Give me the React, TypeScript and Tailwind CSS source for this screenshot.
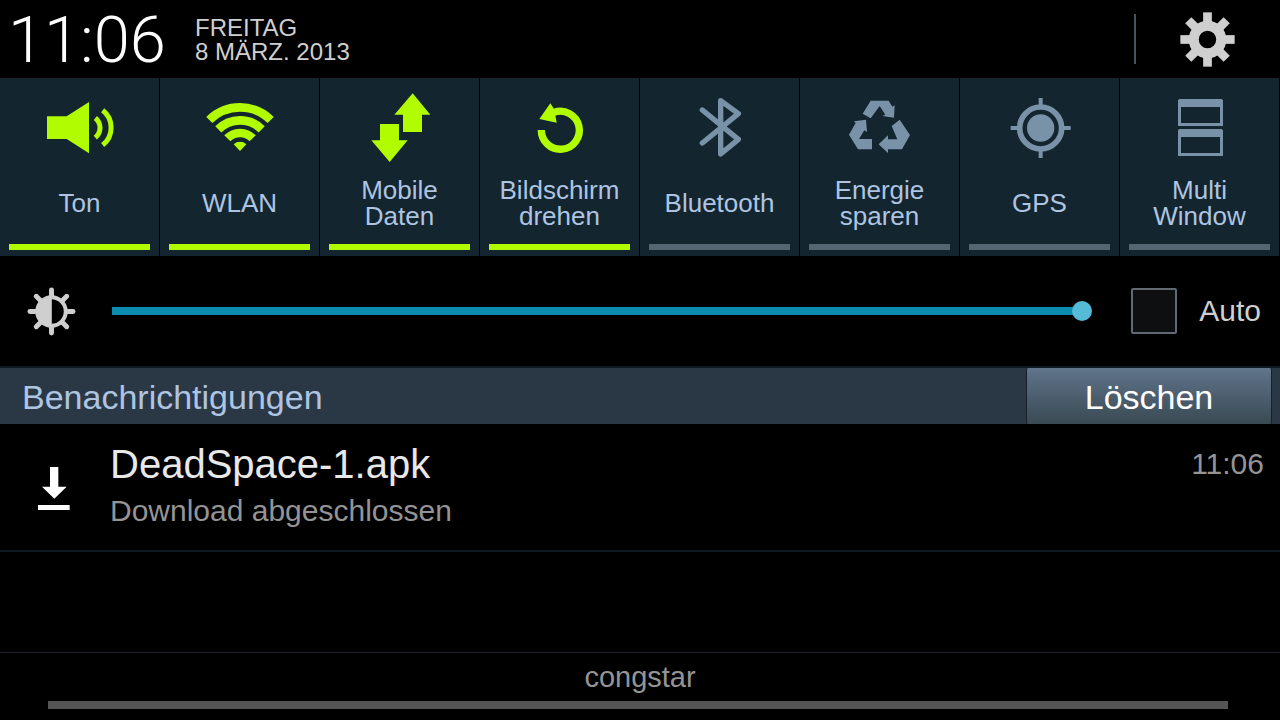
import { useState } from "react"
import type { ReactNode } from "react"

type Toggle = {
  id: string
  label: string
  on: boolean
  icon: ReactNode
}

const initialToggles: Toggle[] = [
  {
    id: "sound",
    label: "Ton",
    on: true,
    icon: (
      <>
        <path d="M141 121H200L267 78V232L200 189H141Z" fill="currentColor" />
        <path d="M286 126A38 38 0 0 1 286 185M308 103A66 66 0 0 1 308 207" fill="none" stroke="currentColor" strokeWidth="15" />
      </>
    ),
  },
  {
    id: "wlan",
    label: "WLAN",
    on: true,
    icon: (
      <>
        <path
          d="M148 132A131 131 0 0 1 332 132M175 160A92 92 0 0 1 305 160M202 187A53 53 0 0 1 278 187"
          fill="none"
          stroke="currentColor"
          strokeWidth="26"
        />
        <path d="M240 225L221 205A28 28 0 0 1 259 205Z" fill="currentColor" />
      </>
    ),
  },
  {
    id: "data",
    label: "Mobile\nDaten",
    on: true,
    icon: (
      <path
        d="M278 52L331 116H306V168H249V116H223ZM180 144H237V193H263L209 258L154 193H180Z"
        fill="currentColor"
      />
    ),
  },
  {
    id: "rotate",
    label: "Bildschirm\ndrehen",
    on: true,
    icon: (
      <>
        <path d="M184 162A57 57 0 1 0 222 109" fill="none" stroke="currentColor" strokeWidth="22" />
        <path d="M211 82L222 99L226 118L230 140L178 129Z" fill="currentColor" />
      </>
    ),
  },
  {
    id: "bluetooth",
    label: "Bluetooth",
    on: false,
    icon: (
      <path
        d="M187 102L295 190L242 234V74L295 113L187 201"
        fill="none"
        stroke="currentColor"
        strokeWidth="16"
        strokeLinecap="round"
        strokeLinejoin="round"
      />
    ),
  },
  {
    id: "energy",
    label: "Energie\nsparen",
    on: false,
    icon: (
      <path
        d="M212 74H266L277 92L284 88L282 125L247 120L256 116L239 90L212 127L188 113ZM162 136L198 131L201 168L193 163L177 189H216V220H174L147 176L167 141ZM299 131L330 177L306 220H264V231L236 205L264 178V190H292L275 150Z"
        fill="currentColor"
      />
    ),
  },
  {
    id: "gps",
    label: "GPS",
    on: false,
    icon: (
      <>
        <circle cx="242" cy="156" r="63" fill="none" stroke="currentColor" strokeWidth="17" />
        <circle cx="242" cy="156" r="41" fill="currentColor" />
        <path d="M242 66V90M242 222V246M152 156H176M308 156H332" stroke="currentColor" strokeWidth="12" />
      </>
    ),
  },
  {
    id: "multi",
    label: "Multi\nWindow",
    on: false,
    icon: (
      <path
        fillRule="evenodd"
        d="M178 69H305L309 73V150H174V73ZM183 93V141H300V93ZM178 159H305L309 163V240H174V163ZM183 183V231H300V183Z"
        fill="currentColor"
      />
    ),
  },
]

const angles = [0, 45, 90, 135, 180, 225, 270, 315]

function GearIcon() {
  return (
    <svg viewBox="-82 -82 164 164" className="h-[55px] w-[55px]" aria-hidden="true">
      <circle r="41" fill="none" stroke="currentColor" strokeWidth="30" />
      {angles.map((a) => (
        <rect key={a} x="-13" y="-81" width="26" height="32" transform={`rotate(${a})`} fill="currentColor" />
      ))}
    </svg>
  )
}

function BrightnessIcon() {
  return (
    <svg viewBox="-74 -74 148 148" className="h-[49px] w-[49px] shrink-0 text-[#cfcfcf]" aria-hidden="true">
      <circle r="43" fill="none" stroke="currentColor" strokeWidth="12" />
      <path d="M1 -44A44 44 0 0 0 1 44Z" fill="currentColor" />
      {angles.map((a) => (
        <path key={a} d="M0 -46V-65" transform={`rotate(${a})`} stroke="currentColor" strokeWidth="15" strokeLinecap="round" />
      ))}
    </svg>
  )
}

export default function App() {
  const [toggles, setToggles] = useState(initialToggles)
  const [brightness, setBrightness] = useState(100)
  const [auto, setAuto] = useState(false)
  const [cleared, setCleared] = useState(false)

  function flip(id: string) {
    setToggles((prev) => prev.map((t) => (t.id === id ? { ...t, on: !t.on } : t)))
  }

  return (
    <div className="flex min-h-screen flex-col bg-black font-['Liberation_Sans',Arial,sans-serif] text-[#cfcfcf]">
      {/* Clock and settings */}
      <header className="flex h-[78px] items-center pl-2">
        <time className="w-[187px] pt-[2px] font-[Roboto,sans-serif] text-[65px] leading-[76px] font-light text-white">11:06</time>
        <p className="pt-[2px] text-2xl leading-6 whitespace-pre-line">{"FREITAG\n8 MÄRZ. 2013"}</p>
        <div className="ml-auto flex h-[50px] w-[146px] items-center border-l-2 border-[#44525f] pl-11">
          <button aria-label="Einstellungen">
            <GearIcon />
          </button>
        </div>
      </header>

      {/* Quick settings */}
      <div className="grid grid-cols-8">
        {toggles.map((t) => (
          <button
            key={t.id}
            aria-pressed={t.on}
            onClick={() => flip(t.id)}
            className="flex flex-col items-center border-r border-black bg-[#132630] pt-[10px] pb-[6px]"
          >
            <svg
              viewBox="117 36 243 228"
              aria-hidden="true"
              className={t.on ? "h-[76px] w-[81px] text-[#b2fc00]" : "h-[76px] w-[81px] text-[#7a92a8]"}
            >
              {t.icon}
            </svg>
            <span className="mt-[13px] flex h-[52px] items-center text-[26px] leading-[26px] whitespace-pre-line text-[#aec4e0]">
              {t.label}
            </span>
            <span className="mt-[15px] w-full px-[9px]">
              <span className={t.on ? "block h-[6px] bg-[#b2fc00]" : "block h-[6px] bg-[#536672]"} />
            </span>
          </button>
        ))}
      </div>

      {/* Brightness */}
      <div className="flex h-[110px] items-center pr-[19px] pl-[27px]">
        <BrightnessIcon />
        <input
          type="range"
          aria-label="Helligkeit"
          min={0}
          max={100}
          value={brightness}
          onChange={(e) => setBrightness(Number(e.target.value))}
          className="mr-[39px] ml-9 h-5 min-w-0 flex-1 appearance-none bg-transparent [&::-webkit-slider-runnable-track]:h-2 [&::-webkit-slider-runnable-track]:bg-[linear-gradient(to_right,#0c8cae_99%,transparent_99%)] [&::-webkit-slider-thumb]:-mt-[6px] [&::-webkit-slider-thumb]:h-5 [&::-webkit-slider-thumb]:w-5 [&::-webkit-slider-thumb]:appearance-none [&::-webkit-slider-thumb]:rounded-full [&::-webkit-slider-thumb]:bg-[#55bbd6]"
        />
        <label className="flex items-center gap-[22px] text-[30px] leading-[48px]">
          <input
            type="checkbox"
            checked={auto}
            onChange={(e) => setAuto(e.target.checked)}
            className="h-[46px] w-[46px] appearance-none rounded-xs border-2 border-[#626972] bg-[#0e0f11] checked:bg-[#0c8cae]"
          />
          Auto
        </label>
      </div>

      {/* Notifications */}
      <div className="flex h-[58px] border-t-2 border-[#0a1924] bg-[#2a3845] pr-2">
        <h2 className="flex-1 pl-[22px] text-[34px] leading-[58px] text-[#aec4e0]">Benachrichtigungen</h2>
        <button
          onClick={() => setCleared(true)}
          className="w-[246px] rounded-xs border-x border-[#172129] bg-linear-to-b from-[#60748b] to-[#3a4a54] text-[34px] leading-[58px] text-white"
        >
          Löschen
        </button>
      </div>
      {!cleared && (
        <article className="flex h-32 items-start border-b-2 border-[#0a1924] pt-4 pr-4">
          <div className="w-[110px] shrink-0 pt-[27px] pl-[38px]">
            <svg viewBox="116 111 96 129" className="h-[43px] w-8 text-white" aria-hidden="true">
              <path d="M152 111H177V170H202L165 206L128 170H152ZM116 225H211V240H116Z" fill="currentColor" />
            </svg>
          </div>
          <div className="min-w-0 flex-1">
            <h3 className="text-[40px] leading-[48px] text-[#e8e8e8]">DeadSpace-1.apk</h3>
            <p className="text-[30px] leading-[46px] text-[#949494]">Download abgeschlossen</p>
          </div>
          <time className="text-[30px] leading-[48px] text-[#949494]">11:06</time>
        </article>
      )}

      {/* Carrier and drag handle */}
      <footer className="mt-auto border-t border-[#1c242a] pb-[11px]">
        <p className="text-center text-[29px] leading-[48px] text-[#949494]">congstar</p>
        <div className="mr-[52px] ml-12 h-2 bg-[#555555]" />
      </footer>
    </div>
  )
}
